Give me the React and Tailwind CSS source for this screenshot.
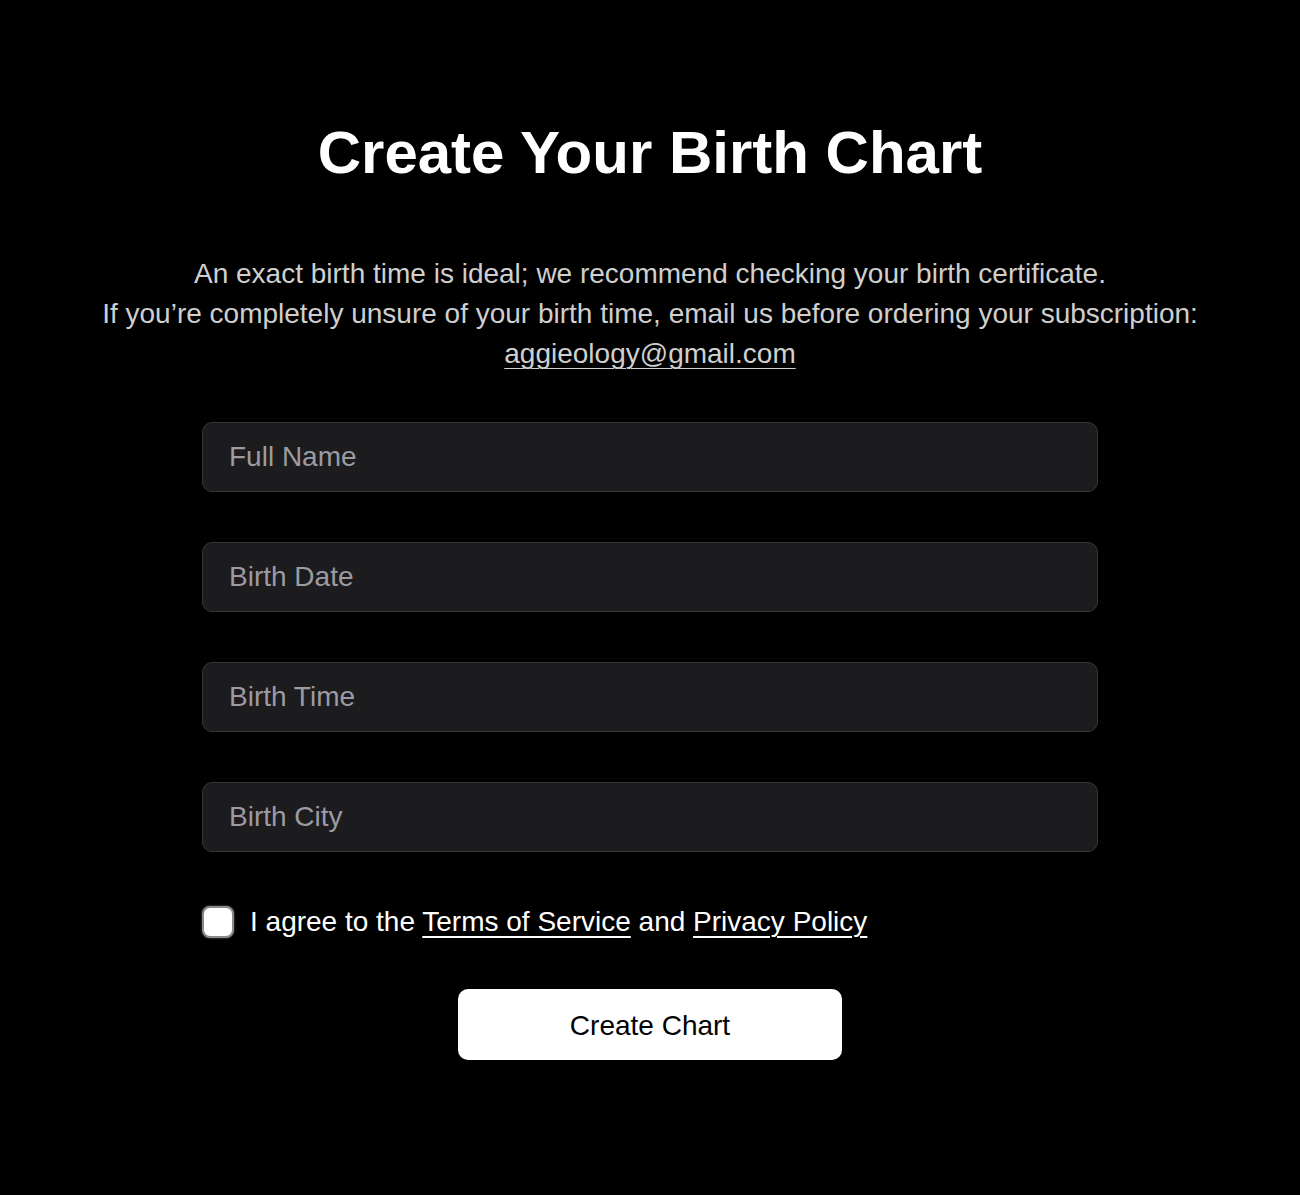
import { useState } from 'react';

const FIELDS = ['Full Name', 'Birth Date', 'Birth Time', 'Birth City'];

export default function App() {
  const [agree, setAgree] = useState(false);
  const [values, setValues] = useState({});

  return (
    <div className="min-h-[1195px] bg-black font-['Liberation_Sans',Arial,sans-serif] text-white">
      <div className="flex flex-col items-center pt-[123px]">
        <h1 className="text-[60px] font-bold leading-none text-white">Create Your Birth Chart</h1>

        <p className="mt-[71px] text-center text-[28px] leading-[40px] text-[#cfcfcf]">
          An exact birth time is ideal; we recommend checking your birth certificate.
          <br />
          If you’re completely unsure of your birth time, email us before ordering your subscription:
          <br />
          <a href="#" className="underline underline-offset-[5px] decoration-1">aggieology@gmail.com</a>
        </p>

        <form className="mt-[48px] flex w-[896px] flex-col gap-[50px]" onSubmit={e => e.preventDefault()}>
          {FIELDS.map(f => (
            <input
              key={f}
              placeholder={f}
              value={values[f] || ''}
              onChange={e => setValues({ ...values, [f]: e.target.value })}
              className="h-[70px] w-full rounded-[10px] border border-[#353538] bg-[#1c1c1e] px-[26px] text-[28px] text-white outline-none placeholder:text-[#9b9ba1]"
            />
          ))}
        </form>

        {/* agree row */}
        <label className="mt-[50px] flex h-[40px] w-[896px] items-center gap-[16px] text-[28px] text-white">
          <button
            type="button"
            onClick={() => setAgree(!agree)}
            className="h-[32px] w-[32px] shrink-0 rounded-[8px] border-2 border-[#8a8a8a] bg-white shadow-[0_0_2px_rgba(255,255,255,0.5)]"
          />
          <span>
            I agree to the <a href="#" className="underline underline-offset-[5px] decoration-2">Terms of Service</a> and{' '}
            <a href="#" className="underline underline-offset-[5px] decoration-2">Privacy Policy</a>
          </span>
        </label>

        <button
          type="button"
          className="mt-[47px] h-[71px] w-[384px] rounded-[10px] bg-white pt-[2px] text-[28px] text-black"
        >
          Create Chart
        </button>
      </div>
    </div>
  );
}
